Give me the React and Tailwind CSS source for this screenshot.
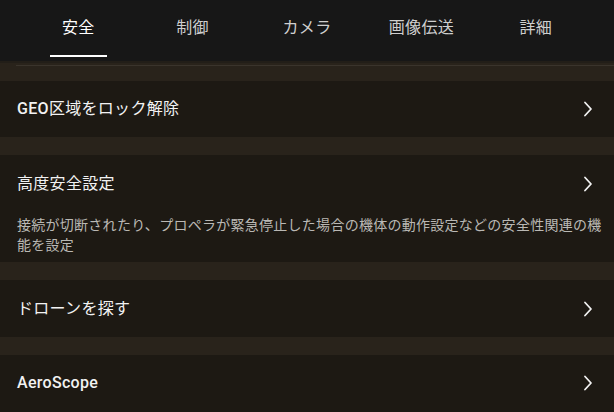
import React from 'react';

const TABS = ['安全', '制御', 'カメラ', '画像伝送', '詳細'];

const FONT = "font-['Roboto','Noto_Sans_CJK_JP',sans-serif]";

// Thin chevron used at the end of each row
function Chevron() {
  return (
    <svg width="10" height="16" viewBox="0 0 10 16" className="shrink-0">
      <path d="M2 1.5 8 8l-6 6.5" fill="none" stroke="#f2f2f2" strokeWidth="1.8" strokeLinecap="round" strokeLinejoin="round" />
    </svg>
  );
}

function Gap({ line }) {
  return (
    <div className="h-[18px] bg-[#29231b]">
      {line && <div className="ml-[16px] h-[1px] bg-[#3a342c] translate-y-[2px]" />}
    </div>
  );
}

function Row({ title, desc, tall }) {
  if (desc) {
    return (
      <div className="bg-[#1d1913] pl-[17px] pr-[10px] pt-[17px] pb-[7px]">
        <div className="flex items-center justify-between pr-[11px]">
          <span className="text-[16px] leading-[24px] tracking-[0.3px] text-[#f2f2f2]">{title}</span>
          <Chevron />
        </div>
        <p className="mt-[19px] text-[14px] leading-[20px] tracking-[0.27px] text-[#bab8b4]">{desc}</p>
      </div>
    );
  }
  return (
    <div className={`flex items-center justify-between bg-[#1d1913] pl-[17px] pr-[21px] ${tall ? 'h-[57px]' : 'h-[56px]'}`}>
      <span className="text-[16px] leading-[24px] tracking-[0.3px] text-[#f2f2f2]">{title}</span>
      <Chevron />
    </div>
  );
}

export default function App() {
  return (
    <div className={`${FONT} w-[614px] h-[412px] overflow-hidden bg-[#1d1913]`}>
      {/* Tabs */}
      <div className="flex h-[61px] bg-[#171717] px-[21px]">
        {TABS.map((t, i) => (
          <div key={t} className="flex flex-1 flex-col items-center pt-[16px]">
            <span className={`text-[16px] leading-[24px] tracking-[0.3px] ${i === 0 ? 'text-white' : 'text-[#cfcfcf]'}`}>{t}</span>
            {i === 0 && <span className="mt-[15px] h-[2px] w-[57px] bg-white" />}
          </div>
        ))}
      </div>
      <div className="h-[2px] bg-[#221e18]" />
      <Gap line />
      <Row title={<><span className="font-medium">GEO</span>区域をロック解除</>} />
      <Gap />
      <Row
        title="高度安全設定"
        desc="接続が切断されたり、プロペラが緊急停止した場合の機体の動作設定などの安全性関連の機能を設定"
      />
      <Gap />
      <Row title="ドローンを探す" tall />
      <Gap />
      <Row title={<span className="font-medium">AeroScope</span>} />
    </div>
  );
}
